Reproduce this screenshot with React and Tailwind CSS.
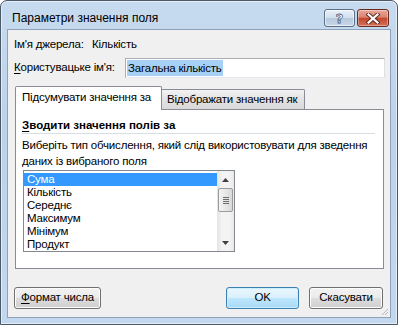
import { useState } from "react";

const items = ["Сума", "Кількість", "Середнє", "Максимум", "Мінімум", "Продукт"];

function HelpButton() {
  return (
    <div className="w-[31px] h-[18px] rounded-[3px] border border-[#5d6f86] bg-[linear-gradient(to_bottom,#e9f0f8_0%,#d3dfec_48%,#b7c9dd_52%,#c9d8e8_100%)] flex items-center justify-center shadow-[inset_0_0_0_1px_rgba(255,255,255,0.55)]">
      <span className="text-[13px] leading-none font-bold text-white [-webkit-text-stroke:0.8px_#56657a] font-['DejaVu_Sans',sans-serif]">?</span>
    </div>
  );
}

function CloseButton() {
  return (
    <div className="w-[32px] h-[18px] rounded-[3px] border border-[#6b2a20] bg-[linear-gradient(to_bottom,#e9a99a_0%,#d98370_45%,#c4462c_52%,#d2705a_100%)] flex items-center justify-center shadow-[inset_0_0_0_1px_rgba(255,255,255,0.35)]">
      <svg width="14" height="11" viewBox="0 0 14 11">
        <path d="M2.5 1.5 L11.5 9.5 M11.5 1.5 L2.5 9.5" stroke="#5a2a22" strokeWidth="4" strokeLinecap="square" />
        <path d="M2.5 1.5 L11.5 9.5 M11.5 1.5 L2.5 9.5" stroke="#ffffff" strokeWidth="2.2" strokeLinecap="square" />
      </svg>
    </div>
  );
}

function Button({ children, primary, className = "" }) {
  return (
    <div
      className={`h-[22px] rounded-[3px] border flex items-center justify-center text-black whitespace-nowrap ${
        primary
          ? "border-[#3c7fb1] bg-[linear-gradient(to_bottom,#eaf6fd_0%,#d9f0fc_48%,#bee6fd_52%,#a7d9f5_100%)] shadow-[inset_0_0_0_1px_#cdeeff]"
          : "border-[#707070] bg-[linear-gradient(to_bottom,#f2f2f2_0%,#ebebeb_48%,#dddddd_52%,#cfcfcf_100%)] shadow-[inset_0_0_0_1px_#fcfcfc]"
      } ${className}`}
    >
      {children}
    </div>
  );
}

function ScrollBar() {
  return (
    <div className="w-[17px] h-full flex flex-col bg-[linear-gradient(to_right,#e3e3e3,#f4f4f4_30%,#f4f4f4_70%,#e8e8e8)]">
      <div className="h-[17px] flex items-center justify-center">
        <svg width="7" height="4" viewBox="0 0 7 4">
          <path d="M0 4 L3.5 0 L7 4 Z" fill="#404040" />
        </svg>
      </div>
      <div className="h-[24px] mx-[1px] rounded-[2px] border border-[#9b9b9b] bg-[linear-gradient(to_right,#f4f4f4,#e8e8e8_50%,#d8d8d8)] flex flex-col items-center justify-center gap-[1px]">
        <div className="w-[6px] h-[1px] bg-[#6d6d6d]" />
        <div className="w-[6px] h-[1px] bg-[#6d6d6d]" />
        <div className="w-[6px] h-[1px] bg-[#6d6d6d]" />
        <div className="w-[6px] h-[1px] bg-[#6d6d6d]" />
      </div>
      <div className="flex-1" />
      <div className="h-[17px] flex items-center justify-center">
        <svg width="7" height="4" viewBox="0 0 7 4">
          <path d="M0 0 L3.5 4 L7 0 Z" fill="#404040" />
        </svg>
      </div>
    </div>
  );
}

export default function App() {
  const [selected] = useState(0);

  return (
    <div className="w-[398px] h-[325px] bg-white font-['Liberation_Sans','Arial',sans-serif] text-[11.5px] tracking-[-0.2px] text-black whitespace-nowrap">
      <div className="h-full flex flex-col rounded-t-[7px] border border-[#4b5868] bg-[linear-gradient(to_bottom,#c7dbef_0%,#bcd2ea_40%,#c3d8ee_100%)] shadow-[inset_0_0_0_1px_rgba(255,255,255,0.55)] px-[6px] pb-[6px]">
        {/* title bar */}
        <div className="h-[28px] pt-[6px] flex items-center justify-between pl-[5px] pr-[2px]">
          <span className="leading-[16px] text-[12px] tracking-normal">Параметри значення поля</span>
          <div className="flex items-center gap-[2px]">
            <HelpButton />
            <CloseButton />
          </div>
        </div>

        {/* client area */}
        <div className="relative flex-1 border border-[#8ea3bb] bg-[#f0f0f0] flex flex-col">
          <div className="mt-[6px] h-[16px] flex items-center pl-[6px] leading-[16px]">
            <span className="w-[78px] shrink-0">Ім'я джерела:</span>
            <span>Кількість</span>
          </div>

          <div className="mt-[6px] h-[20px] flex items-center pl-[6px] pr-[5px]">
            <span className="w-[111px] shrink-0">
              <span className="underline underline-offset-2">К</span>ористувацьке ім'я:
            </span>
            <div className="flex-1 h-[20px] bg-white border border-[#abadb3] border-b-[#e3e9ef] border-r-[#dbdfe6] flex items-center pl-[1px]">
              <span className="bg-[#a6d0f5] leading-[16px] px-[1px]">Загальна кількість</span>
            </div>
          </div>

          {/* tabs */}
          <div className="mt-[8px] pl-[7px] h-[24px] -mb-[1px] flex items-end relative z-10">
            <div className="w-[147px] shrink-0 h-[24px] bg-white border border-b-0 border-[#898c95] rounded-t-[2px] flex items-center pl-[6px] pb-[1px]">
              Підсумувати значення за
            </div>
            <div className="w-[143px] shrink-0 h-[20px] mb-[1px] border border-l-0 border-b-0 border-[#898c95] rounded-tr-[2px] bg-[linear-gradient(to_bottom,#f2f2f2,#e3e3e3_50%,#d9d9d9)] flex items-center pl-[5px]">
              Відображати значення як
            </div>
          </div>

          {/* panel */}
          <div className="ml-[7px] mr-[6px] h-[160px] bg-white border border-[#898c95] flex flex-col pl-[6px] pr-[8px]">
            <div className="mt-[7px] h-[17px] border-b border-[#d5dfe5] font-bold leading-[16px] tracking-normal">
              <span className="underline underline-offset-2">З</span>водити значення полів за
            </div>
            <div className="mt-[3px] leading-[16px]">
              Виберіть тип обчислення, який слід використовувати для зведення
              <br />
              даних із вибраного поля
            </div>
            <div className="mt-[1px] ml-[1px] w-[212px] h-[82px] border border-[#828790] flex overflow-hidden">
              <div className="flex-1 pt-[2px]">
                {items.map((it, i) => (
                  <div
                    key={it}
                    className={`h-[13px] leading-[13px] pl-[3px] ${
                      i === selected ? "bg-[#3399ff] text-white" : ""
                    }`}
                  >
                    {it}
                  </div>
                ))}
              </div>
              <ScrollBar />
            </div>
          </div>

          {/* buttons */}
          <div className="mt-[18px] flex items-center pl-[6px] pr-[7px]">
            <Button className="w-[87px]">
              <span>
                <span className="underline underline-offset-2">Ф</span>ормат числа
              </span>
            </Button>
            <div className="flex-1" />
            <Button primary className="w-[73px]">
              OK
            </Button>
            <Button className="w-[74px] ml-[10px]">Скасувати</Button>
          </div>

          {/* resize grip */}
          <svg className="absolute right-[1px] bottom-[1px]" width="8" height="8" viewBox="0 0 8 8">
            <path d="M7 1 L1 7 M7 4 L4 7" stroke="#b4b8bd" strokeWidth="1" />
          </svg>
        </div>
      </div>
    </div>
  );
}
